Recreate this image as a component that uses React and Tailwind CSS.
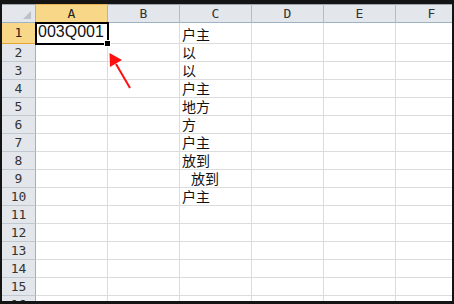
import React from 'react';

const cols = ['A', 'B', 'C', 'D', 'E', 'F'];
const colC = ['户主', '以', '以', '户主', '地方', '方', '户主', '放到', '放到', '户主'];
const rows = Array.from({ length: 16 }, (_, i) => i + 1);

const mono = { fontFamily: '"DejaVu Sans Mono", "Liberation Mono", monospace' };
const cjk = { fontFamily: '"Noto Sans CJK SC", "Noto Sans", sans-serif' };

const App = () => {
  return (
    <div className="w-[454px] h-[304px] bg-[#141414] pt-[4px] pl-[2px] pr-[2px] pb-[3px]">
      <div className="relative w-full h-full overflow-hidden bg-white">
        <div className="grid grid-cols-[34px_repeat(6,72px)] grid-rows-[19px_21px_repeat(15,18px)]">
          {/* Corner */}
          <div className="relative bg-[#e3e6eb] border-t border-t-[#9ea6b0] border-b border-b-[#9eb2c6] border-r border-r-[#a9b1bb]">
            <svg className="absolute right-[4px] bottom-[3px]" width="8" height="8" viewBox="0 0 8 8">
              <polygon points="8,0 8,8 0,8" fill="#bcc2ca" />
            </svg>
          </div>

          {/* Column headers */}
          {cols.map((c) => (
            <div
              key={c}
              className={
                c === 'A'
                  ? 'flex items-center justify-center bg-[#f8d888] border-t border-t-[#e9b455] border-b border-b-[#e5a637] border-r border-r-[#e2ae55] text-[13px] text-[#222]'
                  : 'flex items-center justify-center bg-[#e3e6eb] border-t border-t-[#9ea6b0] border-b border-b-[#9eb2c6] border-r border-r-[#b4bcc6] text-[13px] text-[#333]'
              }
              style={mono}
            >
              {c}
            </div>
          ))}

          {/* Rows */}
          {rows.map((r) => (
            <React.Fragment key={r}>
              <div
                className={
                  r === 1
                    ? 'flex items-center justify-center bg-[#f8d888] border-b border-b-[#e5a637] border-r border-r-[#e5a637] text-[13px] text-[#222]'
                    : 'flex items-center justify-center bg-[#e3e6eb] border-b border-b-[#c2c8d0] border-r border-r-[#9eb2c6] text-[13px] text-[#333]'
                }
                style={mono}
              >
                {r}
              </div>
              {cols.map((c) => (
                <div
                  key={c}
                  className="relative flex items-end border-b border-r border-[#dadcdd] overflow-visible"
                >
                  {c === 'A' && r === 1 && (
                    <span
                      className="pl-[2px] pb-[2px] text-[16px] leading-[18px] text-[#111]"
                      style={{ fontFamily: '"Liberation Sans", Arial, sans-serif' }}
                    >
                      003Q001
                    </span>
                  )}
                  {c === 'C' && r <= 10 && (
                    <span
                      className={`${r === 9 ? 'pl-[11px]' : 'pl-[2px]'} pb-[1px] text-[14px] leading-[15px] text-[#111] whitespace-nowrap`}
                      style={cjk}
                    >
                      {colC[r - 1]}
                    </span>
                  )}
                </div>
              ))}
            </React.Fragment>
          ))}
        </div>

        {/* Active cell selection */}
        <div className="absolute left-[33px] top-[18px] w-[74px] h-[23px] border-2 border-black pointer-events-none" />
        <div className="absolute left-[102px] top-[36px] w-[7px] h-[7px] bg-black border border-white" />

        {/* Red arrow */}
        <svg className="absolute left-0 top-0" width="450" height="297" viewBox="0 0 450 297">
          <line x1="128" y1="84" x2="114" y2="60" stroke="#ff1010" strokeWidth="2" />
          <polygon points="107.5,49 108,63 120,56" fill="#ff1010" />
        </svg>
      </div>
    </div>
  );
};

export default App;
